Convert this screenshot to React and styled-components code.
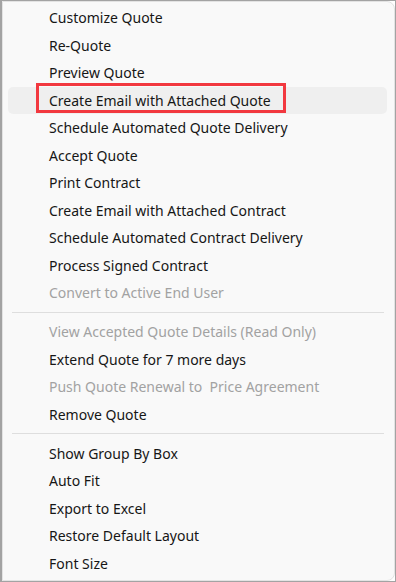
import React from 'react';
import styled, { createGlobalStyle } from 'styled-components';

const GlobalStyle = createGlobalStyle`
  html, body {
    margin: 0;
    padding: 0;
    background: #ffffff;
  }
`;

const groups = [
  [
    { label: 'Customize Quote' },
    { label: 'Re-Quote' },
    { label: 'Preview Quote' },
    { label: 'Create Email with Attached Quote', active: true },
    { label: 'Schedule Automated Quote Delivery' },
    { label: 'Accept Quote' },
    { label: 'Print Contract' },
    { label: 'Create Email with Attached Contract' },
    { label: 'Schedule Automated Contract Delivery' },
    { label: 'Process Signed Contract' },
    { label: 'Convert to Active End User', disabled: true },
  ],
  [
    { label: 'View Accepted Quote Details (Read Only)', disabled: true },
    { label: 'Extend Quote for 7 more days' },
    { label: 'Push Quote Renewal to\u00a0 Price Agreement', disabled: true },
    { label: 'Remove Quote' },
  ],
  [
    { label: 'Show Group By Box' },
    { label: 'Auto Fit' },
    { label: 'Export to Excel' },
    { label: 'Restore Default Layout' },
    { label: 'Font Size' },
  ],
];

export default function App() {
  return (
    <>
      <GlobalStyle />
      <Frame>
        <Menu>
          {groups.map((items, gi) => (
            <React.Fragment key={gi}>
              {gi > 0 && <Separator />}
              {items.map((item) => (
                <Row key={item.label} $active={item.active} $disabled={item.disabled}>
                  {item.label}
                  {item.active && <Callout />}
                </Row>
              ))}
            </React.Fragment>
          ))}
        </Menu>
      </Frame>
    </>
  );
}

const Frame = styled.div`
  width: 396px;
  height: 582px;
  box-sizing: border-box;
  border: 1px solid #a3a3a3;
  border-left-width: 2px;
  background: #ffffff;
  overflow: hidden;
`;

const Menu = styled.div`
  height: 100%;
  box-sizing: border-box;
  background: #f9f9f9;
  border: 1px solid #e3e3e3;
  border-radius: 0 8px 8px 0;
  padding: 2px 7px 4px 5px;
  display: flex;
  flex-direction: column;
  font-family: "Noto Sans", "Open Sans", sans-serif;
  font-size: 14px;
`;

const Row = styled.div`
  position: relative;
  height: 27.5px;
  flex: none;
  display: flex;
  align-items: center;
  padding-left: 41px;
  border-radius: 5px;
  color: ${(p) => (p.$disabled ? '#a2a2a2' : '#161616')};
  background: ${(p) => (p.$active ? '#efefef' : 'transparent')};
  white-space: nowrap;
`;

const Callout = styled.span`
  position: absolute;
  left: 28px;
  top: -4px;
  width: 250px;
  height: 30.5px;
  box-sizing: border-box;
  border: 3px solid #f2383f;
`;

const Separator = styled.div`
  flex: none;
  height: 1px;
  margin: 5px 3px 5.5px 4px;
  background: #dedede;
`;
